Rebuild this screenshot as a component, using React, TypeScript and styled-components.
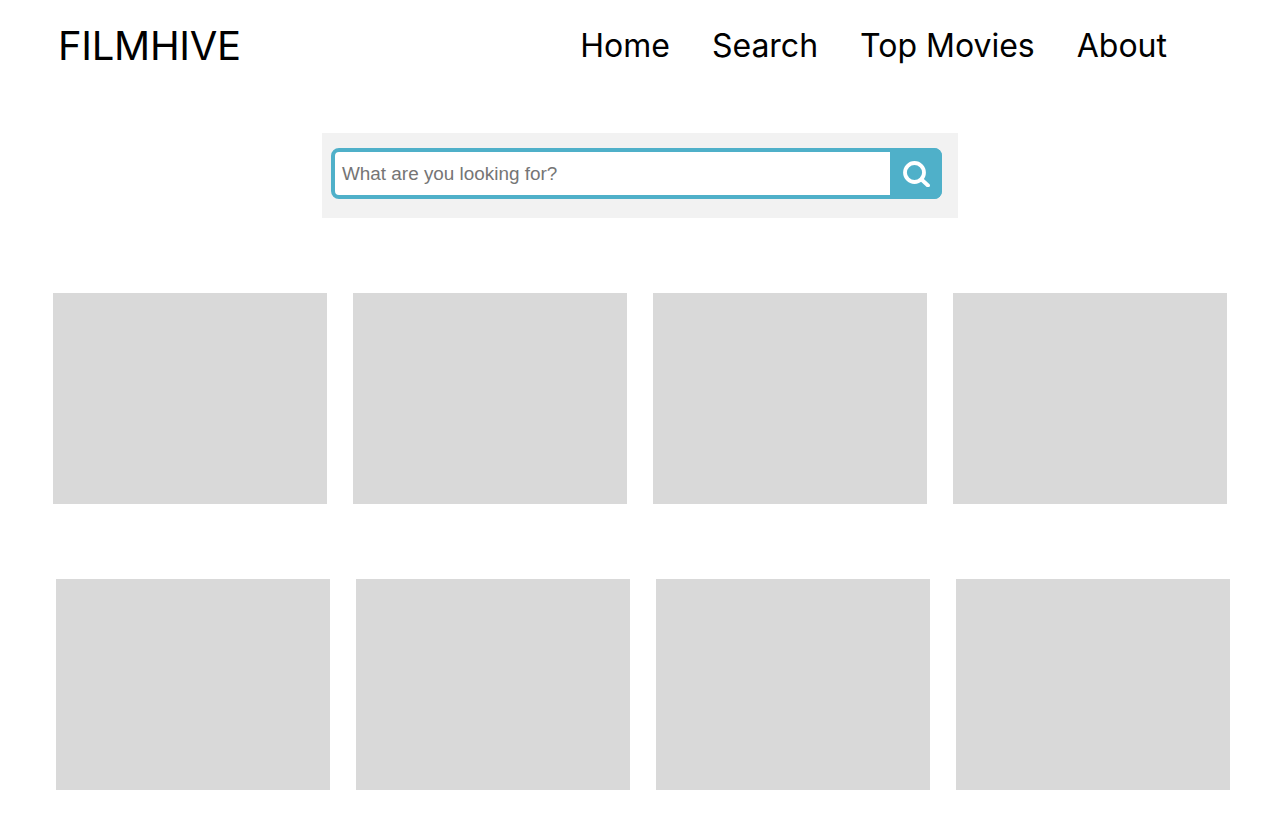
import React from "react";
import styled, { createGlobalStyle } from "styled-components";

const Global = createGlobalStyle`
  html, body { margin: 0; padding: 0; background: #fff; }
  body { font-family: Inter, "Liberation Sans", sans-serif; }
`;
const Page = styled.div`
  width: 1280px; height: 832px; overflow: hidden; display: flex; flex-direction: column;
`;
const Header = styled.header`
  height: 91px; display: flex; align-items: center; justify-content: space-between;
  padding: 0 113px 0 58px;
`;
const Logo = styled.div`font-size: 40px; font-weight: 400; color: #000; line-height: 48px; letter-spacing: -0.3px;`;
const Nav = styled.nav`display: flex; gap: 42px;`;
const NavLink = styled.a`font-size: 32px; font-weight: 400; color: #000; line-height: 39px;`;
const SearchPanel = styled.div`
  margin: 42px auto 0; width: 636px; height: 85px; box-sizing: border-box; background: #f2f2f2;
  padding: 15px 16px 0 9px;
`;
const SearchBar = styled.div`
  height: 51px; box-sizing: border-box; border: 4px solid #4fb0c9; border-radius: 8px;
  display: flex; background: #fff;
`;
const SearchText = styled.div`
  flex: 1; padding-left: 7px; font-family: "Liberation Sans", Arial, sans-serif; font-size: 18.9px;
  line-height: 43px; color: #757575;
`;
const SearchButton = styled.div`
  width: 52px; margin: -4px -4px -4px 0; background: #4fb0c9; border-radius: 0 8px 8px 0;
  display: flex; align-items: center; justify-content: center;
`;
const Grid = styled.div<{ $left: number; $top: number }>`
  display: grid; grid-template-columns: repeat(4, 274px); gap: 26px;
  margin: ${p => p.$top}px 0 0 ${p => p.$left}px;
`;
const Tile = styled.div`height: 211px; background: #d9d9d9;`;

export default function App() {
  return (
    <Page>
      <Global />
      <Header>
        <Logo>FILMHIVE</Logo>
        <Nav>
          <NavLink>Home</NavLink>
          <NavLink>Search</NavLink>
          <NavLink>Top Movies</NavLink>
          <NavLink>About</NavLink>
        </Nav>
      </Header>
      <SearchPanel>
        <SearchBar>
          <SearchText>What are you looking for?</SearchText>
          <SearchButton>
            <svg width="27" height="26" viewBox="0 0 27 26" fill="none" stroke="#fff" strokeLinecap="round">
              <circle cx="11.5" cy="11.5" r="9.5" strokeWidth="3.8" />
              <path d="M18.5 18.5l6.5 6" strokeWidth="3.8" />
            </svg>
          </SearchButton>
        </SearchBar>
      </SearchPanel>
      <Grid $left={53} $top={75}>
        {[0, 1, 2, 3].map(i => <Tile key={i} />)}
      </Grid>
      <Grid $left={56} $top={75}>
        {[0, 1, 2, 3].map(i => <Tile key={i} />)}
      </Grid>
    </Page>
  );
}
